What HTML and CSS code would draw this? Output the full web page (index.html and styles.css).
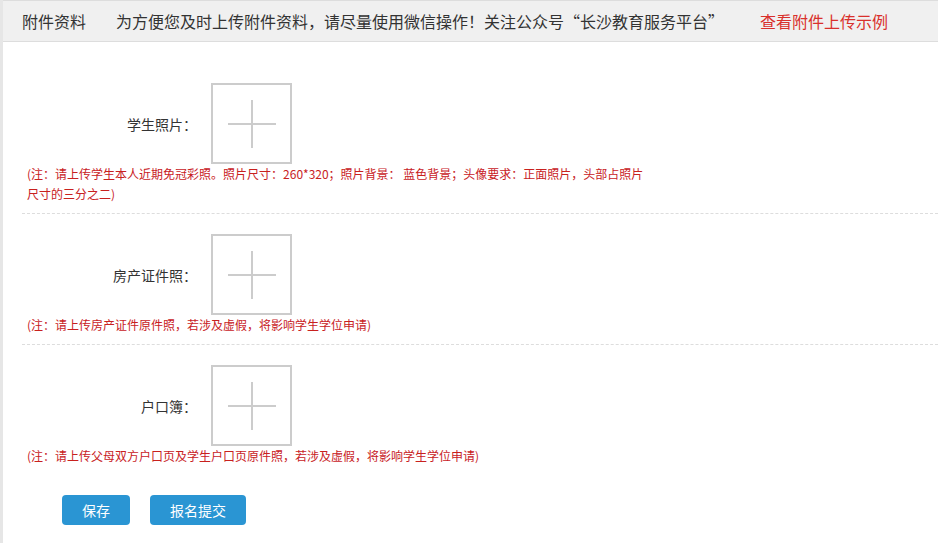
FILE: index.html
```html
<!DOCTYPE html>
<html lang="zh-CN">
<head>
<meta charset="utf-8">
<title>附件资料</title>
<link rel="stylesheet" href="styles.css">
</head>
<body>
<div class="page">
  <div class="header">
    <span class="title">附件资料</span>
    <span class="intro">为方便您及时上传附件资料，请尽量使用微信操作！关注公众号“长沙教育服务平台”</span>
    <a class="link">查看附件上传示例</a>
  </div>
  <div class="content">
    <div class="section first">
      <div class="row">
        <div class="label">学生照片：</div>
        <div class="upload"><svg width="48" height="48" viewBox="0 0 48 48"><path d="M0 24H48M24 0V48" stroke="#cccccc" stroke-width="2" fill="none"/></svg></div>
      </div>
      <p class="note">(注：请上传学生本人近期免冠彩照。照片尺寸：260*320；照片背景： 蓝色背景；头像要求：正面照片，头部占照片尺寸的三分之二)</p>
    </div>
    <div class="section">
      <div class="row">
        <div class="label">房产证件照：</div>
        <div class="upload"><svg width="48" height="48" viewBox="0 0 48 48"><path d="M0 24H48M24 0V48" stroke="#cccccc" stroke-width="2" fill="none"/></svg></div>
      </div>
      <p class="note">(注：请上传房产证件原件照，若涉及虚假，将影响学生学位申请)</p>
    </div>
    <div class="section last">
      <div class="row">
        <div class="label">户口簿：</div>
        <div class="upload"><svg width="48" height="48" viewBox="0 0 48 48"><path d="M0 24H48M24 0V48" stroke="#cccccc" stroke-width="2" fill="none"/></svg></div>
      </div>
      <p class="note">(注：请上传父母双方户口页及学生户口页原件照，若涉及虚假，将影响学生学位申请)</p>
    </div>
    <div class="actions">
      <button class="btn save">保存</button>
      <button class="btn submit">报名提交</button>
    </div>
  </div>
</div>
</body>
</html>
```

FILE: styles.css
```css
html, body {
  margin: 0;
  padding: 0;
  background: #ffffff;
}
body {
  font-family: "Noto Sans CJK SC", "Noto Sans", sans-serif;
  color: #333333;
}
.page {
  border-left: 3px solid #e6e6e6;
  min-height: 543px;
  box-sizing: border-box;
}
.header {
  height: 40px;
  background: #f0f0f0;
  border-top: 1px solid #dddddd;
  border-bottom: 1px solid #dddddd;
  display: flex;
  align-items: center;
  padding-left: 19px;
  font-size: 16px;
  color: #333333;
  white-space: nowrap;
}
.title {
  margin-right: 30px;
}
.link {
  margin-left: 36px;
  color: #d9302c;
}
.content {
  padding-left: 19px;
}
.section {
  padding-top: 20px;
  padding-bottom: 9px;
  border-bottom: 1px dashed #dddddd;
}
.section.first {
  padding-top: 41px;
}
.section.last {
  border-bottom: none;
  padding-bottom: 0;
}
.row {
  display: flex;
  align-items: center;
}
.label {
  width: 175px;
  text-align: right;
  font-size: 14px;
  color: #333333;
}
.upload {
  margin-left: 14px;
  width: 77px;
  height: 77px;
  border: 2px solid #cccccc;
  display: flex;
  align-items: center;
  justify-content: center;
}
.note {
  margin: 0;
  padding-left: 5px;
  width: 625px;
  font-size: 12px;
  line-height: 20px;
  color: #c8211e;
}
.actions {
  display: flex;
  gap: 20px;
  padding-left: 40px;
  padding-top: 29px;
}
.btn {
  height: 30px;
  border: none;
  border-radius: 4px;
  background: #2a95d3;
  color: #ffffff;
  font-family: "Noto Sans CJK SC", sans-serif;
  font-size: 14px;
  padding: 0;
}
.btn.save {
  width: 68px;
}
.btn.submit {
  width: 96px;
}
```
